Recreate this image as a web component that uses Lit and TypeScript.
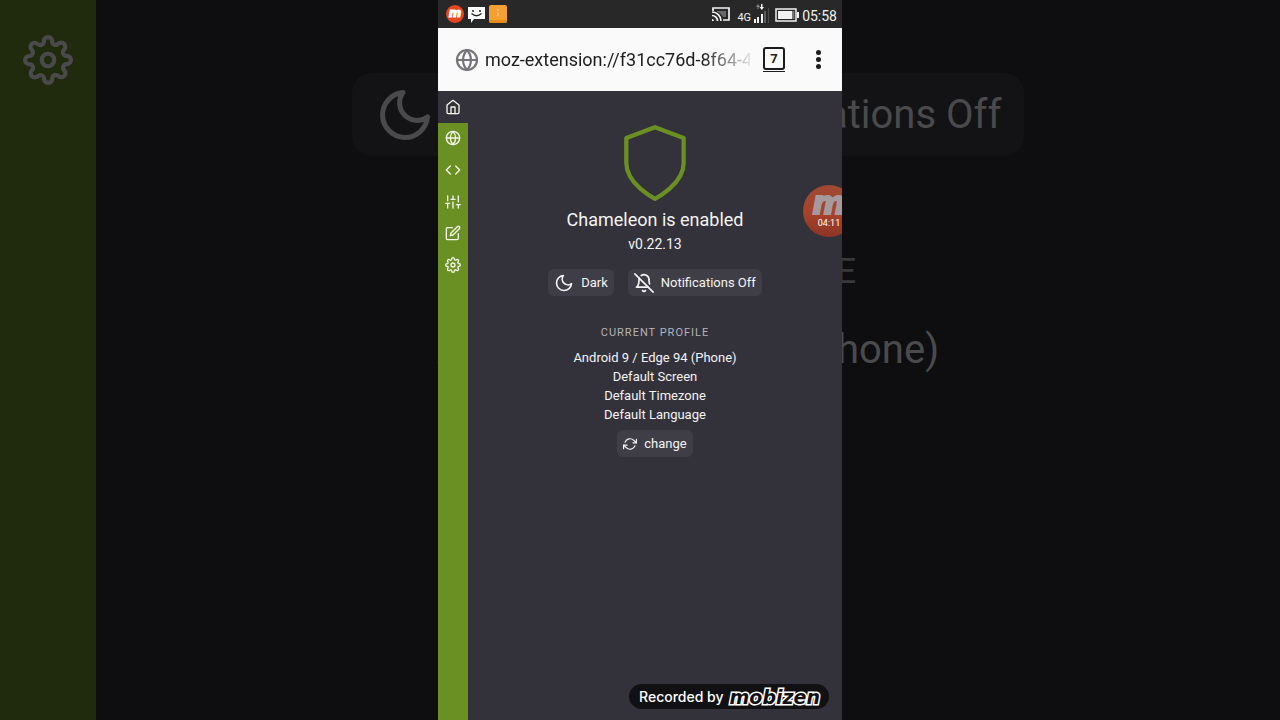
import { LitElement, html, css, svg } from "lit";
import { customElement, property, state } from "lit/decorators.js";

const GLYPHS: Record<string, unknown> = {
  home: svg`<path d="M3 9l9-7 9 7v11a2 2 0 0 1-2 2H5a2 2 0 0 1-2-2z"/><polyline points="9 22 9 12 15 12 15 22"/>`,
  globe: svg`<circle cx="12" cy="12" r="10"/><line x1="2" y1="12" x2="22" y2="12"/><path d="M12 2a15.3 15.3 0 0 1 4 10 15.3 15.3 0 0 1-4 10 15.3 15.3 0 0 1-4-10 15.3 15.3 0 0 1 4-10z"/>`,
  code: svg`<polyline points="16 18 22 12 16 6"/><polyline points="8 6 2 12 8 18"/>`,
  sliders: svg`<line x1="4" y1="21" x2="4" y2="14"/><line x1="4" y1="10" x2="4" y2="3"/><line x1="12" y1="21" x2="12" y2="12"/><line x1="12" y1="8" x2="12" y2="3"/><line x1="20" y1="21" x2="20" y2="16"/><line x1="20" y1="12" x2="20" y2="3"/><line x1="1" y1="14" x2="7" y2="14"/><line x1="9" y1="8" x2="15" y2="8"/><line x1="17" y1="16" x2="23" y2="16"/>`,
  edit: svg`<path d="M11 4H4a2 2 0 0 0-2 2v14a2 2 0 0 0 2 2h14a2 2 0 0 0 2-2v-7"/><path d="M18.500 2.500a2.121 2.121 0 0 1 3 3L12 15l-4 1 1-4 9.500-9.500z"/>`,
  settings: svg`<circle cx="12" cy="12" r="3"/><path d="M19.400 15a1.650 1.650 0 0 0 .330 1.820l.060.060a2 2 0 0 1 0 2.830 2 2 0 0 1-2.830 0l-.060-.060a1.650 1.650 0 0 0-1.820-.330 1.650 1.650 0 0 0-1 1.510V21a2 2 0 0 1-2 2 2 2 0 0 1-2-2v-.090A1.650 1.650 0 0 0 9 19.400a1.650 1.650 0 0 0-1.820.330l-.060.060a2 2 0 0 1-2.830 0 2 2 0 0 1 0-2.830l.060-.060a1.650 1.650 0 0 0 .330-1.820 1.650 1.650 0 0 0-1.510-1H3a2 2 0 0 1-2-2 2 2 0 0 1 2-2h.090A1.650 1.650 0 0 0 4.600 9a1.650 1.650 0 0 0-.330-1.820l-.060-.060a2 2 0 0 1 0-2.830 2 2 0 0 1 2.830 0l.060.060a1.650 1.650 0 0 0 1.820.330H9a1.650 1.650 0 0 0 1-1.510V3a2 2 0 0 1 2-2 2 2 0 0 1 2 2v.090a1.650 1.650 0 0 0 1 1.510 1.650 1.650 0 0 0 1.820-.330l.060-.060a2 2 0 0 1 2.830 0 2 2 0 0 1 0 2.830l-.060.060a1.650 1.650 0 0 0-.330 1.820V9a1.650 1.650 0 0 0 1.510 1H21a2 2 0 0 1 2 2 2 2 0 0 1-2 2h-.090a1.650 1.650 0 0 0-1.510 1z"/>`,
  moon: svg`<path d="M21 12.790A9 9 0 1 1 11.210 3 7 7 0 0 0 21 12.790z"/>`,
  bellOff: svg`<path d="M13.730 21a2 2 0 0 1-3.460 0"/><path d="M18.630 13A17.890 17.890 0 0 1 18 8"/><path d="M6.260 6.260A5.860 5.860 0 0 0 6 8c0 7-3 9-3 9h14"/><path d="M18 8a6 6 0 0 0-9.330-5"/><line x1="1" y1="1" x2="23" y2="23"/>`,
  refresh: svg`<polyline points="23 4 23 10 17 10"/><polyline points="1 20 1 14 7 14"/><path d="M3.510 9a9 9 0 0 1 14.850-3.360L23 10M1 14l4.640 4.360A9 9 0 0 0 20.490 15"/>`,
  shield: svg`<path d="M12 22s8-4 8-10V5l-8-3-8 3v7c0 6 8 10 8 10z"/>`,
};

@customElement("line-icon")
class LineIcon extends LitElement {
  static styles = css`
    :host { display: block; flex: none; width: 16px; height: 16px; }
    svg { display: block; width: 100%; height: 100%; overflow: visible; }
  `;
  @property() name = "home";
  @property({ type: Number }) weight = 2;
  render() {
    return html`<svg viewBox="0 0 24 24" fill="none" stroke="currentColor" stroke-width=${this.weight}
      stroke-linecap="round" stroke-linejoin="round" aria-hidden="true">${GLYPHS[this.name]}</svg>`;
  }
}

@customElement("status-bar")
class StatusBar extends LitElement {
  static styles = css`
    :host {
      display: flex; align-items: center; justify-content: space-between;
      height: 28px; padding: 0 5px 0 8px; background: #282828; color: #f2f2f2;
      font-family: Roboto, sans-serif;
    }
    .group { display: flex; align-items: center; }
    .left { gap: 4px; }
    svg { display: block; flex: none; }
    .brand {
      display: flex; align-items: center; justify-content: center;
      width: 18px; height: 18px; border-radius: 50%; background: #e8451f; color: #fff;
      font: italic 700 12px/16px "DejaVu Sans", sans-serif; -webkit-text-stroke: 1px #fff;
    }
    .brand span { height: 18px; }
    .net { margin-left: 6px; padding-top: 8px; font-size: 11px; line-height: 12px; }
    .signal { margin-left: 2px; }
    .battery { margin-left: 5px; }
    .clock { margin-left: 3px; padding-top: 4px; font-size: 14px; line-height: 16px; }
  `;
  render() {
    return html`
      <div class="group left">
        <div class="brand"><span>m</span></div>
        <svg width="17" height="17" viewBox="0 0 17 17"><path fill="#fff" d="M0 1h17v12H6l-3 4v-4H0z"/>
          <circle cx="5" cy="5" r="1" fill="#222"/><circle cx="12" cy="5" r="1" fill="#222"/>
          <path d="M3.500 7.500q5 4.500 10 0" fill="none" stroke="#222" stroke-width="1.300"/></svg>
        <svg width="18" height="18" viewBox="0 0 18 18"><rect width="18" height="18" rx="2" fill="#f5a030"/>
          <path d="M0 15h18v1a2 2 0 0 1-2 2H2a2 2 0 0 1-2-2z" fill="#e88b1e"/>
          <path d="M9 4v7" stroke="#f8c67c" stroke-width="1.500"/><path d="M9 6v1.500" stroke="#c98d40" stroke-width="1"/></svg>
      </div>
      <div class="group">
        <svg width="20" height="16" viewBox="0 0 20 16" fill="none" stroke="#f2f2f2" stroke-width="1.700">
          <path d="M2 5V2h16v12h-6"/><path d="M1 6a9 9 0 0 1 9 9M1 9.500a5.500 5.500 0 0 1 5.500 5.500"/>
          <path d="M1 15v-2a2 2 0 0 1 2 2z" fill="#f2f2f2" stroke="none"/><path d="M6 5h9v6h-3q-2-4-6-5z" fill="#66666a" stroke="none"/></svg>
        <span class="net">4G</span>
        <svg class="signal" width="17" height="22" viewBox="0 0 17 22" fill="#f2f2f2">
          <rect x="1" y="16" width="2" height="4"/><rect x="4" y="14" width="2" height="6"/><rect x="8" y="11" width="2" height="9"/>
          <rect x="11" y="8" width="2" height="12" fill="#5c5c5c"/><rect x="15" y="5" width="1" height="15" fill="#4c4c4c"/>
          <path d="M3 4l2-3 2 3H5.500v2h-1V4z" fill="#888"/><path d="M6.500 4H8V1h1.500v3H11L8.800 7z"/></svg>
        <svg class="battery" width="24" height="16" viewBox="0 0 24 16">
          <rect x="1" y="3" width="20" height="12" fill="none" stroke="#f2f2f2" stroke-width="1.500"/>
          <rect x="3" y="5" width="14" height="8" fill="#f2f2f2"/><rect x="17" y="5" width="2.500" height="8" fill="#77777b"/>
          <rect x="22" y="6" width="2" height="6" fill="#f2f2f2"/></svg>
        <span class="clock">05:58</span>
      </div>`;
  }
}

@customElement("address-bar")
class AddressBar extends LitElement {
  static styles = css`
    :host {
      display: flex; align-items: center; box-sizing: border-box; height: 63px;
      padding: 0 14px 0 17px; background: #fafafa; color: #222; font-family: Roboto, sans-serif;
    }
    .globe { width: 24px; height: 24px; color: #74747a; }
    .url {
      flex: 1; min-width: 0; margin: 0 12px 0 6px; padding: 0; border: 0; outline: 0;
      background: none; color: #1c1c1e; font: 18px/24px Roboto, sans-serif;
      -webkit-mask-image: linear-gradient(to right, #000 calc(100% - 48px), rgba(0, 0, 0, 0.1));
      mask-image: linear-gradient(to right, #000 calc(100% - 48px), rgba(0, 0, 0, 0.1));
    }
    button { padding: 0; border: 0; background: none; color: inherit; }
    .tabs { display: grid; gap: 1px; width: 24px; }
    .count {
      box-sizing: border-box; margin: 0 1px; height: 23px; border: 2px solid #1c1c1e; border-radius: 3px;
      font: 700 13px/20px Roboto, sans-serif;
    }
    .under { height: 1px; margin: 0 1px; background: #1c1c1e; }
    .menu { display: grid; justify-items: center; gap: 2px; width: 20px; margin-left: 22px; }
    .dot { width: 5px; height: 5px; border-radius: 50%; background: #1c1c1e; }
  `;
  render() {
    return html`
      <line-icon class="globe" name="globe" weight="2.200"></line-icon>
      <input class="url" type="text" readonly aria-label="Address" value="moz-extension://f31cc76d-8f64-4" />
      <button class="tabs" aria-label="7 open tabs"><span class="count">7</span><span class="under"></span></button>
      <button class="menu" aria-label="Menu"><span class="dot"></span><span class="dot"></span><span class="dot"></span></button>`;
  }
}

const PROFILE = ["Android 9 / Edge 94 (Phone)", "Default Screen", "Default Timezone", "Default Language"];
const SECTIONS = [
  ["home", "Home"], ["globe", "Profile"], ["code", "Headers"],
  ["sliders", "Options"], ["edit", "Whitelist"], ["settings", "Settings"],
];

@customElement("extension-page")
class ExtensionPage extends LitElement {
  static styles = css`
    :host { display: flex; flex: 1; min-height: 0; color: #f4f4f5; font-family: Roboto, sans-serif; background: #33313a; }
    .rail { width: 30px; background: #6a9023; }
    .items { display: grid; grid-auto-rows: 1fr; height: 190px; }
    .item { display: grid; place-items: center; color: #f4f7ec; }
    .item.active { background: #33313a; }
    .main { flex: 1; display: flex; flex-direction: column; align-items: center; padding-top: 29px; }
    .shield { width: 86px; height: 86px; color: #6a9023; }
    h1 { margin: 0; font-size: 18px; font-weight: 400; line-height: 28px; }
    .version { font-size: 14px; line-height: 20px; }
    .toggles { display: flex; gap: 14px; margin: 15px 0 27px; }
    .pill {
      display: flex; align-items: center; gap: 7px; height: 27px; padding: 0 6px; border: 0; border-radius: 6px;
      background: #3f3d46; color: inherit; font: 13px/19px Roboto, sans-serif;
    }
    .pill line-icon { width: 20px; height: 20px; }
    .pill .small { width: 14px; height: 14px; }
    h2 { margin: 0 0 5px; font-size: 11px; font-weight: 400; line-height: 20px; letter-spacing: 1px; color: #b5b4b9; }
    ul { margin: 0 0 6px; padding: 0; list-style: none; text-align: center; font-size: 13px; line-height: 19px; }
  `;
  @state() private current = "home";
  render() {
    return html`
      <nav class="rail"><div class="items">
        ${SECTIONS.map(([icon, label]) => html`<a class="item ${icon === this.current ? "active" : ""}" href="#${icon}" aria-label=${label}
          @click=${() => (this.current = icon)}><line-icon name=${icon}></line-icon></a>`)}
      </div></nav>
      <main class="main">
        <line-icon class="shield" name="shield" weight="1.200"></line-icon>
        <h1>Chameleon is enabled</h1>
        <div class="version">v0.22.13</div>
        <div class="toggles">
          <button class="pill"><line-icon name="moon"></line-icon>Dark</button>
          <button class="pill"><line-icon name="bellOff"></line-icon>Notifications Off</button>
        </div>
        <h2>CURRENT PROFILE</h2>
        <ul>${PROFILE.map((line) => html`<li>${line}</li>`)}</ul>
        <button class="pill"><line-icon class="small" name="refresh"></line-icon>change</button>
      </main>`;
  }
}

/* Dimmed, enlarged view of the page that fills the window behind the phone. */
@customElement("page-backdrop")
class PageBackdrop extends LitElement {
  static styles = css`
    :host { display: flex; overflow: hidden; background: #0e0e10; color: #4a4a4c; font-family: Roboto, sans-serif; }
    .rail { flex: none; width: 96px; box-sizing: border-box; padding-top: 35px; background: #202a0d; }
    .rail line-icon { width: 50px; height: 50px; margin: 0 auto; }
    .main { flex: 1; display: flex; flex-direction: column; align-items: center; padding-top: 73px; white-space: nowrap; }
    .row { display: flex; gap: 44px; margin-bottom: 84px; }
    .pill {
      display: flex; align-items: center; gap: 20px; box-sizing: border-box; height: 83px; padding: 0 23px;
      border-radius: 20px; background: #131315; font-size: 40px;
    }
    .short { width: 210px; }
    .pill line-icon { width: 60px; height: 60px; }
    .title { margin-bottom: 16px; font-size: 35px; line-height: 64px; letter-spacing: 3px; color: #39393b; }
    .line { height: 60px; font-size: 40px; line-height: 60px; }
  `;
  render() {
    return html`
      <div class="rail"><line-icon name="settings"></line-icon></div>
      <div class="main">
        <div class="row">
          <div class="pill short"><line-icon name="moon"></line-icon></div>
          <div class="pill"><line-icon name="bellOff"></line-icon>Notifications Off</div>
        </div>
        <div class="title">CURRENT PROFILE</div>
        <div class="line">${PROFILE[0]}</div>
      </div>`;
  }
}

@customElement("app-root")
class AppRoot extends LitElement {
  static styles = css`
    :host { display: flex; justify-content: center; position: relative; height: 100vh; overflow: hidden; background: #0e0e10; }
    .backdrop { position: absolute; inset: 0; }
    .phone {
      position: relative; display: flex; flex-direction: column; height: 100%; aspect-ratio: 101 / 180;
      max-width: 100%; overflow: hidden; font-family: Roboto, sans-serif;
    }
    .bubble {
      position: absolute; top: 185px; right: -13px; width: 52px; height: 52px; border-radius: 50%;
      box-sizing: border-box; padding: 0 0 7px; border: 0;
      background: linear-gradient(#9e4a34, #a84229 55%, #8c3527); color: #fff; text-align: center;
    }
    .bubble b { display: block; color: #a79a9e; font: italic 700 32px/30px "DejaVu Sans", sans-serif; -webkit-text-stroke: 2px #a79a9e; }
    .bubble span { display: block; font: 9px/10px Roboto, sans-serif; }
    .stamp {
      position: absolute; right: 13px; bottom: 11px; display: flex; align-items: center; gap: 6px;
      box-sizing: border-box; height: 25px; padding: 0 9px 0 10px; border-radius: 13px; background: #111113; color: #fff;
      font: 500 14px/20px Inter, sans-serif; white-space: nowrap;
    }
    .wordmark {
      color: #111113; font: italic 700 19px/20px "DejaVu Sans", sans-serif;
      -webkit-text-stroke: 3px #fff; paint-order: stroke fill;
    }
  `;
  render() {
    return html`
      <page-backdrop class="backdrop" aria-hidden="true"></page-backdrop>
      <div class="phone">
        <status-bar></status-bar>
        <address-bar></address-bar>
        <extension-page></extension-page>
        <button class="bubble" aria-label="Recording, 04:11"><b>m</b><span>04:11</span></button>
        <div class="stamp"><span>Recorded by</span><span class="wordmark">mobizen</span></div>
      </div>`;
  }
}
